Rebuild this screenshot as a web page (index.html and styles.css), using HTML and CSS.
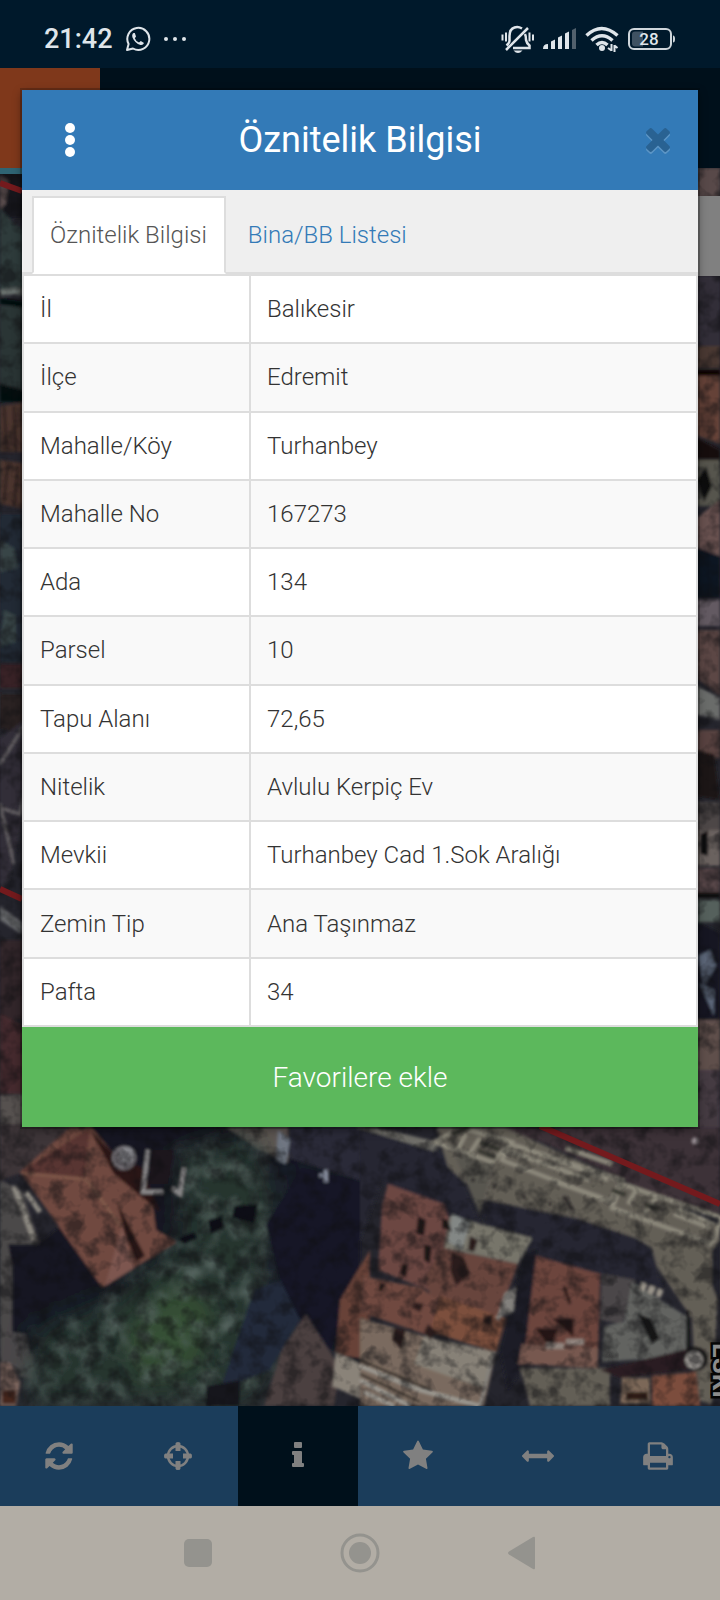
FILE: index.html
```html
<!DOCTYPE html>
<html lang="tr">
<head>
    <meta charset="UTF-8">
    <meta name="viewport" content="width=device-width, initial-scale=1">
    <title>Öznitelik Bilgisi</title>
    <link rel="stylesheet" href="styles.css">
</head>

<body>
    <div class="status-bar">
        <span class="clock">21:42</span>
        <svg class="st-chat" width="26" height="26" viewBox="0 0 26 26" fill="none" stroke="#dfe5ea" stroke-width="2">
            <path d="M2 24l1.6-6A11 11 0 1 1 8 22.5z" stroke-linejoin="round"/>
            <path d="M8.500 7q-2 1.500-1 4.500 2.500 6 8 7.500 2.500.5 3.500-2l-3.200-2-1.800 1.500q-3-1-4.200-4.300L11 10.500 9.800 7z" fill="#dfe5ea" stroke="none"/>
        </svg>
        <svg class="st-dots" width="24" height="6" viewBox="0 0 24 6" fill="#dfe5ea">
            <circle cx="3" cy="3" r="2"/><circle cx="12" cy="3" r="2"/><circle cx="21" cy="3" r="2"/>
        </svg>
        <div class="status-right">
            <svg width="33" height="30" viewBox="0 0 33 30" fill="none" stroke="#dfe5ea" stroke-width="2.5">
                <path d="M27 4L5 26M21 4.500Q17 2 13.500 3.500 8.500 5 8.500 12v5q0 2-3 4.500M24 10q1 2 1 6 .5 3 3.500 5.500V24H12"/>
                <path d="M12.500 26.500h9q-4.500 5-9 0z" fill="#dfe5ea" stroke="none"/>
                <path d="M1.500 10.500v6M5 8.500v9M28.500 8.500v9M32 10.500v6" stroke-width="2"/>
            </svg>
            <svg width="33" height="24" viewBox="0 0 33 24" fill="#dfe5ea">
                <path d="M0 22q0-5 5-5v5zM8 14.500l4-2V22H8zM15 10.500l4-2V22h-4zM22 6.500l4-2V22h-4z"/>
                <path d="M29 3l4-2v21h-4z" fill="#51606c"/>
            </svg>
            <svg width="34" height="28" viewBox="0 0 34 28" fill="none" stroke="#dfe5ea" stroke-width="3.5">
                <path d="M1.500 10.500q15-14 31 0M6.500 15.500q10.500-9.500 21 0M11.500 20q5.500-5 11 0"/>
                <circle cx="17" cy="23" r="3" fill="#dfe5ea" stroke="none"/>
                <path d="M26.500 19v7M29.500 20v7M23 23l3.500 2.500M29.500 20.500l3 2.500" stroke-width="2"/>
            </svg>
            <svg width="48" height="22" viewBox="0 0 48 22">
                <rect x="1" y="1" width="42" height="20" rx="5" fill="none" stroke="#cfd6db" stroke-width="2"/>
                <path d="M7 3.500h8v15H7q-3 0-3-3v-9q0-3 3-3z" fill="#3f5262"/>
                <path d="M45 7.500q2 0 2 3.500t-2 3.500z" fill="#cfd6db"/>
                <text class="battery" x="21" y="17" text-anchor="middle">28</text>
            </svg>
        </div>
    </div>

    <div class="app-header">
        <div class="logo"></div>
    </div>

    <div class="map">
        <svg viewBox="0 168 720 1238" preserveAspectRatio="xMidYMin slice">
            <defs>
                <filter id="soft" x="0" y="0" width="100%" height="100%">
                    <feGaussianBlur stdDeviation="1.5"/>
                </filter>
                <filter id="grain" x="0" y="0" width="100%" height="100%" color-interpolation-filters="sRGB">
                    <feTurbulence type="fractalNoise" baseFrequency="0.06" numOctaves="3" seed="4"/>
                    <feColorMatrix values="0 0 0 0 0.06  0 0 0 0 0.06  0 0 0 0 0.07  0 3 0 0 -1.3"/>
                </filter>
                <filter id="leaf" x="-10%" y="-10%" width="120%" height="120%" color-interpolation-filters="sRGB">
                    <feGaussianBlur in="SourceAlpha" stdDeviation="12" result="shape"/>
                    <feTurbulence type="fractalNoise" baseFrequency="0.05" numOctaves="4" seed="9"/>
                    <feColorMatrix values="0 0 0 0 0.32  0 0 0 0 0.38  0 0 0 0 0.36  0 2.5 0 0 -1.1"/>
                    <feComposite in2="shape" operator="in" result="light"/>
                    <feGaussianBlur in="SourceGraphic" stdDeviation="12" result="base"/>
                    <feMerge><feMergeNode in="base"/><feMergeNode in="light"/></feMerge>
                </filter>
            </defs>
            <rect y="168" width="720" height="1238" fill="#25252d"/>
            <g filter="url(#soft)">
                <!-- left edge -->
                <path d="M0 168h30v50H0z" fill="#15161f"/>
                <path d="M0 176l8 4-2 24-6 6z" fill="#584c4b"/>
                <path d="M0 208l14 16 16 10v60H0z" fill="#2d3a3a"/>
                <path d="M0 290q14-4 30 0v8q-14-6-30-2z" fill="#69706d"/>
                <path d="M0 306h30v84H0z" fill="#2b3635"/>
                <path d="M0 298l30 4v7L0 304zM0 384l30 8v10H0z" fill="#06070a"/>
                <path d="M0 406l30-4v50H0zM0 460l30 4v46l-30-6z" fill="#4b342e"/>
                <path d="M4 406l3 44M14 406l2 46M8 464l-4 36M18 466l-4 40" stroke="#241a1c" stroke-width="2"/>
                <path d="M0 514h30v148H0z" fill="#222b35"/>
                <path d="M0 540l14 8 4 20-18 4zM4 610l12 6v26l-16 4z" fill="#394447"/>
                <path d="M0 664h30v24H0z" fill="#392426"/>
                <path d="M0 694h30v44L0 728z" fill="#2a2124"/>
                <path d="M0 738l30-22v76L6 890H0z" fill="#302f37"/>
                <path d="M0 764l24-38M0 808l20 6 6-28M0 804l14 60" stroke="#736e71" stroke-width="2" fill="none"/>
                <path d="M0 906l30 22v12L0 920z" fill="#66676a"/>
                <path d="M0 940h30v80H0z" fill="#302529"/>
                <path d="M0 1014l30 14v66H0z" fill="#442b2d"/>
                <path d="M0 1095h30v30H0z" fill="#57514f"/>
                <!-- right edge -->
                <path d="M694 168h26v30h-26z" fill="#584948"/>
                <path d="M694 276h26v76h-26z" fill="#302e37"/>
                <path d="M694 346h26v22h-26z" fill="#4a3932"/>
                <path d="M694 370h26v6h-26z" fill="#080506"/>
                <path d="M694 376h26v68l-26-10z" fill="#654338"/>
                <path d="M694 436l26 14v12h-26z" fill="#160d0d"/>
                <path d="M694 460h26v46h-26z" fill="#56544e"/>
                <path d="M696 480l10-14 6 20-8 16z" fill="#0d1010"/>
                <path d="M694 520l26-20v58l-26-10z" fill="#67514f"/>
                <path d="M694 546l26 10v42h-26z" fill="#111523"/>
                <path d="M694 600h26v26h-26z" fill="#645a62"/>
                <path d="M694 630h26v66l-26-20z" fill="#5b4644"/>
                <path d="M694 684l26 14v22l-26-6z" fill="#6b6c6a"/>
                <path d="M694 730h26v28h-26z" fill="#59433f"/>
                <path d="M694 750l20 4 6 46-26-4z" fill="#1d1715"/>
                <path d="M694 802h26v28h-26z" fill="#4e4746"/>
                <path d="M694 830h26v36h-26z" fill="#6a625e"/>
                <path d="M700 834l8-4v26l-8-2z" fill="#0f0e10"/>
                <path d="M694 868h26v24h-26z" fill="#594648"/>
                <path d="M694 892h26v6h-26z" fill="#0b090b"/>
                <path d="M694 900h26v22h-26z" fill="#55605b"/>
                <path d="M694 920l26 12v90h-26z" fill="#131722"/>
                <path d="M698 956l12-6 6 16-12 20zM700 984l14 6v26" fill="#5c6678"/>
                <path d="M694 1020h26v50h-26z" fill="#5e4f4b"/>
                <path d="M694 1070h26v60h-26z" fill="#443a42"/>
                <!-- ground, left half -->
                <path d="M0 1124h90L24 1172 0 1180z" fill="#3e3437"/>
                <path d="M0 1180l22 10 20 60-10 130-32-10z" fill="#4c484a"/>
                <path d="M88 1124h170l-10 150-80 80H30l-22-110 30 0 50-40z" fill="#161721"/>
                <path d="M12 1246l60-4 30 60-20 40-70-10z" fill="#131823"/>
                <path d="M270 1124h90v240l-40-20-54-60z" fill="#171a27"/>
                <path d="M288 1124h72v56l-72-22z" fill="#2b2c37"/>
                <path d="M226 1127h62v36l-30-14z" fill="#5e5753"/>
                <path d="M278 1130l12 10-4 24-10-4z" fill="#707783"/>
                <g filter="url(#leaf)">
                    <path d="M178 1150l70-16 30 60-14 80 24 60-34 72H26l10-76 70-30 74-60z" fill="#26342f"/>
                    <path d="M126 1330l50-50 40 30-20 60-60 10z" fill="#354f34"/>
                </g>
                <path d="M234 1206l24-2-4 20-22-6zM208 1220l14-4 2 12-14 6zM178 1238l16-6 4 6-14 6z" fill="#0b1114"/>
                <path d="M266 1224l36-56 58 14v80l-30 88-44-44z" fill="#141927"/>
                <path d="M254 1290l26-10 20 40-30 50-50 20z" fill="#222b3a"/>
                <path d="M282 1350l24-36 34 54-6 38h-70z" fill="#4b4140"/>
                <path d="M206 1386l34-6v26h-34z" fill="#12131a"/>
                <path d="M340 1300l30-50v110l-34-6z" fill="#684339"/>
                <path d="M336 1352l40 20v34l-44-20z" fill="#8a8379"/>
                <!-- hip roof -->
                <path d="M38 1160l52-33-70 45z" fill="#432522"/>
                <path d="M20 1172l50-44 20-2 34 40 28 34 4 30 20 12-74 45z" fill="#70483f"/>
                <path d="M20 1172l70-44-6 52z" fill="#593631"/>
                <path d="M88 1180l34 46-17 60-83-113z" fill="#704a40"/>
                <path d="M122 1226l12 42-29 18z" fill="#7d5650"/>
                <path d="M117 1202l28 54-9 6-12-32z" fill="#251513"/>
                <path d="M90 1130l24 24 28 14 18 44-46-38z" fill="#2c1818"/>
                <path d="M22 1173l64 6 34 46" stroke="#87604f" stroke-width="2" fill="none"/>
                <circle cx="124" cy="1158" r="12" fill="#6e6b70"/>
                <circle cx="127" cy="1155" r="8" fill="#85858a"/>
                <path d="M148 1150l-5 42h20M172 1188l8 6 4-26" stroke="#8a8889" stroke-width="4" fill="none"/>
                <path d="M152 1150h22l-6 34h-20z" fill="#1a151e"/>
                <path d="M14 1186l20 54M26 1192l14 20" stroke="#8f8b83" stroke-width="5"/>
                <path d="M0 1363h10l10 20-4 23H0z" fill="#7c655d"/>
                <path d="M2 1390h14v14H2z" fill="#45271f"/>
                <path d="M326 1170v12M321 1174v3" stroke="#858b9b" stroke-width="4"/>
                <!-- road and rooftops, right half -->
                <path d="M360 1127l94 28 26 70-70-10-28-34-22 60z" fill="#252833"/>
                <path d="M470 1127h250v90l-40-10-140-66z" fill="#3c3239"/>
                <path d="M436 1127h68l216 98v30l-8 150-16-6-4-80-40-60-160-52-44-40z" fill="#635e57"/>
                <path d="M356 1127h20l66 16-8 8z" fill="#706e69"/>
                <path d="M486 1200l90 18 60 20 16 10 12 46-90-10-90-60z" fill="#252731"/>
                <path d="M712 1250l8-10v66l-8-20z" fill="#22242c"/>
                <path d="M484 1200l-4 14-26-60 40 8z" fill="#59564f"/>
                <g stroke="#8e8a7d" stroke-width="4" fill="none">
                    <path d="M434 1142l58 20 20-20-50-14zM510 1144l112 36-12 22-108-42zM622 1184l100 34-10 26-100-36z"/>
                    <path d="M506 1150l84 30M518 1146l86 32M556 1182l46 16M568 1164l40 16M678 1208l36 16M674 1214l36 14"/>
                    <path d="M566 1148l46 16M466 1134l-10 18M480 1138l-12 18M636 1190l-8 14M656 1198l-12 16"/>
                </g>
                <path d="M452 1134l20-8M480 1142l20 8M478 1150l18 8M612 1190l14 5M644 1204l16 6" stroke="#383730" stroke-width="5"/>
                <path d="M471 1180h4M492 1187h4M522 1197h4M548 1204h4M564 1196l8 14" stroke="#2e2b2a" stroke-width="4"/>
                <path d="M388 1184l56 20 8 24-14 66-60-24 4-64z" fill="#6c4643"/>
                <path d="M450 1216l82 22-14 26-74-16z" fill="#77756b"/>
                <path d="M452 1214l18 8-8 28-14-8z" fill="#838785"/>
                <path d="M442 1248l76 16-20 54-62-6-12-34z" fill="#68443c"/>
                <path d="M362 1276l60 12 18 14-10 34-70-24z" fill="#704a41"/>
                <path d="M440 1296l66 22-10 34-66-20z" fill="#7c4f3e"/>
                <path d="M360 1318l70 20 66 14-12 54H360z" fill="#7a6b5e"/>
                <path d="M424 1336l72 16-14 36-68-24z" fill="#878177"/>
                <path d="M418 1216l8 4-2 16-8-2zM442 1218l6 2 4 12-10-4zM424 1244l8 2-2 18-6-4zM402 1264l6 0-2 14-6-4zM380 1282l6 2-4 8-4-2z" fill="#1f1316"/>
                <path d="M452 1252l12 6 6 16-14 12-6-16zM470 1236l8 4-4 12-6-2zM486 1316l8-2-4 12-8-4zM414 1302l10 2-4 8-8-4zM394 1328l12 2-4 20-10-10zM428 1324l10 8-8 8-6-8z" fill="#2b1e1f"/>
                <path d="M524 1254l14-6-12 116-18 26-8-40z" fill="#1b1d28"/>
                <path d="M536 1256l64 18-2 90-74-6z" fill="#6c453c"/>
                <path d="M522 1344l76 4v20l-80-4z" fill="#77584f"/>
                <path d="M564 1286l6 18M538 1330h18l-6 16zM556 1320h16v14z" fill="#251917" stroke="#251917" stroke-width="3"/>
                <path d="M546 1346h18M566 1342h18" stroke="#91857e" stroke-width="6"/>
                <path d="M520 1368h90v38h-80z" fill="#645e56"/>
                <path d="M602 1274l34 6-14 44-22-4z" fill="#4c4748"/>
                <path d="M632 1282l54 34v40l-84 6 2-36 20-4z" fill="#626461"/>
                <path d="M640 1286l22 8" stroke="#9b958b" stroke-width="8" stroke-dasharray="6 3"/>
                <path d="M640 1316l10 4 8 18-6 4zM688 1310v40" fill="#151517" stroke="#151517" stroke-width="3"/>
                <path d="M600 1370l92-22 8 20-80 10z" fill="#2a1e22"/>
                <path d="M622 1378l28 0v26h-30z" fill="#7b6759"/>
                <path d="M652 1376l44-4 4 34h-48z" fill="#7c4d3e"/>
                <path d="M626 1392h22v8h-22z" fill="#2d1b17"/>
                <path d="M498 1320l8-26 8-4-2 20-16 8M494 1352l-14 54" fill="#83817d" stroke="#83817d" stroke-width="3"/>
                <path d="M360 1366l60 24 60 16M360 1380l50 26M364 1392l30 14" stroke="#9c9992" stroke-width="4" fill="none"/>
                <path d="M360 1360l70 30M360 1374l60 28" stroke="#26221f" stroke-width="2"/>
                <circle cx="696" cy="1359" r="12" fill="#141214"/>
                <circle cx="694" cy="1360" r="9" fill="#9e9a95"/>
                <circle cx="695" cy="1141" r="3" fill="#998f94"/>
            </g>
            <rect class="grain" y="168" width="720" height="1238" filter="url(#grain)"/>
            <!-- parcel boundary -->
            <path d="M0 183l22 8M0 889l22 10M540 1126l180 78" fill="none" stroke="#741a1d" stroke-width="6"/>
            <text class="street" transform="translate(713 1343) rotate(90)">ESKİ</text>
            <path d="M0 168h22v6H0z" fill="#2f6473"/>
            <path d="M640 196h80v80h-80z" fill="#808080"/>
        </svg>
    </div>

    <div class="toolbar">
        <button type="button" aria-label="Yenile">
            <svg viewBox="0 0 1792 1792"><path d="M1639 1056q0 5-1 7-64 268-268 434.500t-478 166.500q-146 0-282.500-55t-243.500-157l-129 129q-19 19-45 19t-45-19-19-45v-448q0-26 19-45t45-19h448q26 0 45 19t19 45-19 45l-137 137q71 66 161 102t187 36q134 0 250-65t186-179q11-17 53-117 8-23 30-23h192q13 0 22.500 9.500t9.500 22.500zm25-800v448q0 26-19 45t-45 19h-448q-26 0-45-19t-19-45 19-45l138-138q-148-137-349-137-134 0-250 65t-186 179q-11 17-53 117-8 23-30 23h-199q-13 0-22.500-9.500t-9.500-22.500v-7q65-268 270-434.500t480-166.500q146 0 284 55.500t245 156.500l130-129q19-19 45-19t45 19 19 45z"/></svg>
        </button>
        <button type="button" aria-label="Konum">
            <svg viewBox="0 0 32 32"><circle cx="16" cy="16" r="10" fill="none" stroke="#808080" stroke-width="2.5"/><path d="M13.500 3.500q0-1.500 2.500-1.500t2.500 1.500V11h-5zM13.500 21h5v7.500q0 1.500-2.500 1.500t-2.500-1.500zM3.500 13.500H11v5H3.500Q2 18.500 2 16t1.500-2.500zM21 13.500h7.500q1.500 0 1.500 2.500t-1.500 2.500H21z"/></svg>
        </button>
        <button type="button" class="active" aria-label="Bilgi">
            <svg viewBox="0 0 32 32"><path d="M13 2h6q1 0 1 1v4q0 1-1 1h-6q-1 0-1-1V3q0-1 1-1zM11 11h8q1 0 1 1v11h1q1 0 1 1v2q0 1-1 1H11q-1 0-1-1v-2q0-1 1-1h1v-8h-1q-1 0-1-1v-2q0-1 1-1z"/></svg>
        </button>
        <button type="button" aria-label="Favoriler">
            <svg viewBox="0 0 1792 1792"><path d="M1728 647q0 22-26 48l-363 354 86 500q1 7 1 20 0 21-10.500 35.500t-30.500 14.500q-19 0-40-12l-449-236-449 236q-22 12-40 12-21 0-31.500-14.500t-10.500-35.500q0-6 2-20l86-500-364-354q-25-27-25-48 0-37 56-46l502-73 225-455q19-41 49-41t49 41l225 455 502 73q56 9 56 46z"/></svg>
        </button>
        <button type="button" aria-label="Ölçüm">
            <svg viewBox="0 0 1792 1792"><path d="M1792 896q0 26-19 45l-256 256q-19 19-45 19t-45-19-19-45v-128h-1024v128q0 26-19 45t-45 19-45-19l-256-256q-19-19-19-45t19-45l256-256q19-19 45-19t45 19 19 45v128h1024v-128q0-26 19-45t45-19 45 19l256 256q19 19 19 45z"/></svg>
        </button>
        <button type="button" aria-label="Yazdır">
            <svg viewBox="0 0 1792 1792"><path d="M448 1536h896v-256h-896v256zm0-640h896v-384h-160q-40 0-68-28t-28-68v-160h-640v640zm1152 64q0-26-19-45t-45-19-45 19-19 45 19 45 45 19 45-19 19-45zm128 0v416q0 13-9.500 22.500t-22.500 9.500h-224v160q0 40-28 68t-68 28h-960q-40 0-68-28t-28-68v-160h-224q-13 0-22.500-9.500t-9.500-22.500v-416q0-79 56.500-135.500t135.500-56.500h64v-544q0-40 28-68t68-28h672q40 0 88 20t76 48l152 152q28 28 48 76t20 88v256h64q79 0 135.500 56.500t56.500 135.500z"/></svg>
        </button>
    </div>

    <div class="nav-bar">
        <button type="button" aria-label="Son uygulamalar">
            <svg viewBox="0 0 40 40"><rect x="6" y="6" width="28" height="28" rx="5"/></svg>
        </button>
        <button type="button" aria-label="Ana ekran">
            <svg viewBox="0 0 40 40"><circle cx="20" cy="20" r="18" fill="none" stroke="#94938e" stroke-width="3"/><circle cx="20" cy="20" r="11"/></svg>
        </button>
        <button type="button" aria-label="Geri">
            <svg viewBox="0 0 40 40"><path d="M7 18.500L31 4q2-1 2 1v30q0 2-2 1L7 21.500q-2-1.500 0-3z"/></svg>
        </button>
    </div>

    <div class="modal" role="dialog" aria-labelledby="modal-title">
        <div class="modal-header">
            <button type="button" class="menu" aria-label="Menü">
                <svg width="12" height="36" viewBox="0 0 12 36"><circle cx="6" cy="6" r="5"/><circle cx="6" cy="18" r="5"/><circle cx="6" cy="30" r="5"/></svg>
            </button>
            <h1 id="modal-title">Öznitelik Bilgisi</h1>
            <button type="button" class="close" aria-label="Kapat">
                <svg width="36" height="36" viewBox="0 64 1792 1792"><path d="M1490 1322q0 40-28 68l-136 136q-28 28-68 28t-68-28l-294-294-294 294q-28 28-68 28t-68-28l-136-136q-28-28-28-68t28-68l294-294-294-294q-28-28-28-68t28-68l136-136q28-28 68-28t68 28l294 294 294-294q28-28 68-28t68 28l136 136q28 28 28 68t-28 68l-294 294 294 294q28 28 28 68z"/></svg>
            </button>
        </div>
        <div class="tabs">
            <a href="#oznitelik" class="active">Öznitelik Bilgisi</a>
            <a href="#bina">Bina/BB Listesi</a>
        </div>
        <table id="oznitelik">
            <tr><th scope="row">İl</th><td>Balıkesir</td></tr>
            <tr><th scope="row">İlçe</th><td>Edremit</td></tr>
            <tr><th scope="row">Mahalle/Köy</th><td>Turhanbey</td></tr>
            <tr><th scope="row">Mahalle No</th><td>167273</td></tr>
            <tr><th scope="row">Ada</th><td>134</td></tr>
            <tr><th scope="row">Parsel</th><td>10</td></tr>
            <tr><th scope="row">Tapu Alanı</th><td>72,65</td></tr>
            <tr><th scope="row">Nitelik</th><td>Avlulu Kerpiç Ev</td></tr>
            <tr><th scope="row">Mevkii</th><td>Turhanbey Cad 1.Sok Aralığı</td></tr>
            <tr><th scope="row">Zemin Tip</th><td>Ana Taşınmaz</td></tr>
            <tr><th scope="row">Pafta</th><td>34</td></tr>
        </table>
        <button type="button" class="favorite">Favorilere ekle</button>
    </div>
</body>

</html>
```
FILE: styles.css
```css
* {
    box-sizing: border-box;
}

body {
    margin: 0;
    min-height: 100vh;
    display: flex;
    flex-direction: column;
    position: relative;
    font-family: Roboto, sans-serif;
    font-weight: 300;
    font-size: 24px;
    color: #333;
    background: #00101b;
}

button {
    margin: 0;
    padding: 0;
    border: 0;
    background: none;
    font: inherit;
    color: inherit;
    cursor: pointer;
}

svg {
    display: block;
}

/* phone status bar */
.status-bar {
    height: 68px;
    padding: 10px 44px 0;
    display: flex;
    align-items: center;
    background: #00192b;
    color: #dfe5ea;
}

.clock {
    font-size: 27px;
    font-weight: 500;
}

.st-chat {
    margin-left: 12px;
}

.st-dots {
    margin-left: 12px;
}

.status-right {
    margin-left: auto;
    display: flex;
    align-items: center;
    gap: 9px;
}

.battery {
    font-size: 17px;
    font-weight: 500;
    fill: #dfe5ea;
}

.app-header {
    height: 100px;
    background: #00101b;
}

.logo {
    width: 100px;
    height: 100px;
    background: #7f381b;
}

/* map */
.map {
    flex: 1 1 0;
    min-height: 0;
    overflow: hidden;
}

.map svg {
    width: 100%;
    height: 100%;
}

.grain {
    opacity: .5;
}

.street {
    font-size: 26px;
    font-weight: 700;
    fill: #8c8c8c;
    stroke: #050505;
    stroke-width: 5px;
    paint-order: stroke;
}

/* bottom bars */
.toolbar {
    height: 100px;
    padding-right: 2px;
    display: grid;
    grid-template-columns: 118px repeat(5, 1fr);
    background: #1b3d5b;
}

.toolbar button {
    display: flex;
    align-items: center;
    justify-content: center;
}

.toolbar .active {
    background: #00101b;
}

.toolbar svg {
    width: 32px;
    height: 32px;
    fill: #808080;
}

.nav-bar {
    height: 94px;
    display: flex;
    align-items: center;
    justify-content: center;
    gap: 122px;
    background: #b2ada5;
}

.nav-bar svg {
    width: 40px;
    height: 40px;
    fill: #94938e;
}

/* dialog */
.modal {
    position: absolute;
    top: 90px;
    left: 22px;
    right: 22px;
    background: #fff;
    box-shadow: 0 0 0 2px rgba(0, 0, 0, .2), 0 3px 9px rgba(0, 0, 0, .4);
}

.modal-header {
    height: 100px;
    display: flex;
    align-items: center;
    background: #337ab7;
    color: #fff;
}

.modal-header h1 {
    flex: 1;
    margin: 0;
    font-size: 36px;
    font-weight: 400;
    text-align: center;
}

.menu,
.close {
    width: 96px;
    height: 100px;
    display: flex;
    align-items: center;
    justify-content: center;
}

.menu svg {
    fill: #fff;
}

.close {
    padding-left: 16px;
}

.close svg {
    fill: #296292;
    filter: drop-shadow(0 2px 0 #5c95c5);
}

.tabs {
    height: 84px;
    padding: 6px 10px 0;
    display: flex;
    gap: 4px;
    background: #efefef;
    border-bottom: 2px solid #ddd;
}

.tabs a {
    height: 78px;
    padding: 0 17px 0 16px;
    border: 2px solid transparent;
    line-height: 74px;
    color: #337ab7;
    text-decoration: none;
}

.tabs .active {
    color: #555;
    background: #fff;
    border-color: #ddd;
    border-bottom-color: #fff;
}

table {
    width: 100%;
    height: 753px;
    border-collapse: collapse;
    border: 2px solid #ddd;
}

th,
td {
    padding: 0 16px;
    border: 2px solid #ddd;
    font-weight: 300;
    text-align: left;
}

th {
    width: 227px;
}

tr:nth-child(even) {
    background: #f9f9f9;
}

.favorite {
    width: 100%;
    height: 100px;
    display: block;
    font-size: 28px;
    color: #fff;
    background: #5cb85c;
}
```
